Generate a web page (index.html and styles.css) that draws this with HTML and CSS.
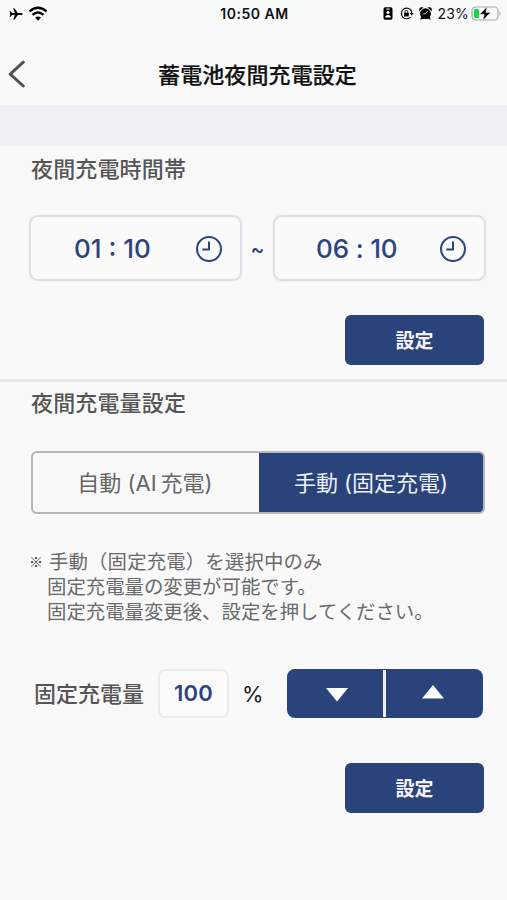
FILE: index.html
```html
<!DOCTYPE html>
<html lang="ja">
<head>
<meta charset="utf-8">
<meta name="viewport" content="width=device-width">
<title>蓄電池夜間充電設定</title>
<link rel="stylesheet" href="styles.css">
</head>
<body>
<div class="status">
  <div class="status-left">
    <svg width="14" height="14" viewBox="0 0 14 14"><path d="M13.7 7c0 .7-.9 1.100-2 1.100H8.900L5.400 12.800H4.100L5.800 8.100H3.100L1.700 9.800H.6L1.200 7 .6 4.200h1.100l1.400 1.700h2.700L4.100 1.200h1.300l3.500 4.700h2.800c1.100 0 2 .4 2 1.100z"/></svg>
    <svg width="20" height="15" viewBox="0 0 20 15"><g fill="none" stroke="#000" stroke-width="2.500"><path d="M1.500 5.400Q10-2 18.500 5.400"/><path d="M4.500 8.900Q10 4.200 15.500 8.900"/></g><path d="M7 11.600Q10 9.300 13 11.600L10 14.700z"/></svg>
  </div>
  <div class="status-time">10:50 AM</div>
  <div class="status-right">
    <svg width="10" height="13" viewBox="0 0 10 13"><rect x=".5" y=".2" width="9" height="12.600" rx="1.700"/><g fill="#f8faf9"><rect x="3.200" y="1.500" width="3.600" height="1"/><circle cx="5" cy="5.400" r="1.500"/><path d="M2.300 10.500V9.300Q5 6.800 7.700 9.300V10.500z"/></g></svg>
    <svg class="lock" width="14" height="13" viewBox="0 0 14 13"><path d="M10.300 2.500A5.300 5.300 0 1 0 10.600 10.100M10.300 2.500A5.300 5.300 0 0 1 11.700 6.500" fill="none" stroke="#111" stroke-width="1.200"/><path d="M9.700 6h4l-2 2.600z"/><rect x="4" y="5.800" width="4.800" height="3.700" rx=".5"/><path d="M5 6V4.800a1.400 1.400 0 0 1 2.800 0V6" fill="none" stroke="#111"/></svg>
    <svg class="alarm" width="13" height="13" viewBox="0 0 13 13"><circle cx="6.500" cy="6.700" r="5.400"/><path d="M.2 4.600V2.500A2.200 2.200 0 0 1 2.500.3H4.500zM12.800 4.600V2.500A2.200 2.200 0 0 0 10.500.3H8.500zM1.200 12.700l1-3.500 3.500 2zM11.800 12.700L10.800 9.200 7.300 11.200z"/><path d="M8.500 4.200L6.500 6.800H4.300" fill="none" stroke="#fff" stroke-width=".8"/></svg>
    <span class="pct">23%</span>
    <svg class="battery" width="31" height="15" viewBox="0 0 31 15"><rect x="1" y="1" width="26" height="13" rx="3.700" fill="#fafafa" stroke="#a9abaa" stroke-width="1.200"/><path d="M28.500 5q2.300 2.500 0 5z" fill="#a9abaa"/><rect x="2.800" y="2.900" width="5.400" height="9.200" rx="1.500" fill="#20d447"/><path d="M16.300.6L8.600 8.300h4.700L11.700 14.400l8-8h-4.900z" stroke="#fafafa" stroke-width=".5"/></svg>
  </div>
</div>
<header class="nav">
  <svg width="18" height="28" viewBox="0 0 18 28"><path d="M15.300 2.200L2.200 14.200 15.300 26" fill="none" stroke="#505050" stroke-width="3" stroke-linecap="round" stroke-linejoin="round"/></svg>
  <h1>蓄電池夜間充電設定</h1>
</header>
<div class="band"></div>
<section class="hours">
  <h2>夜間充電時間帯</h2>
  <div class="times">
    <div class="time"><span>01 : 10</span><svg width="28" height="28" viewBox="0 0 28 28"><circle cx="14" cy="14" r="12"/><path d="M14 6.500V14.400H7.300"/></svg></div>
    <span class="tilde">~</span>
    <div class="time end"><span>06 : 10</span><svg width="28" height="28" viewBox="0 0 28 28"><circle cx="14" cy="14" r="12"/><path d="M14 6.500V14.400H7.300"/></svg></div>
  </div>
  <button class="submit">設定</button>
</section>
<section class="amount">
  <h2>夜間充電量設定</h2>
  <div class="modes">
    <div class="mode"><span>自動 (AI<span class="thin"> </span>充電)</span></div>
    <div class="mode active"><span>手動 (固定充電)</span></div>
  </div>
  <div class="note">
    <span class="mark">※</span>
    <div class="lines">
      <p class="first">手動（固定充電）を選択中のみ</p>
      <p>固定充電量の変更が可能です。</p>
      <p>固定充電量変更後、設定を押してください。</p>
    </div>
  </div>
  <div class="level">
    <span class="label">固定充電量</span>
    <span class="value">100</span>
    <span class="unit">%</span>
    <div class="stepper">
      <div class="step"><svg width="22" height="14" viewBox="0 0 22 14"><path d="M0 0H22L11 13.500z"/></svg></div>
      <div class="step up"><svg width="22" height="14" viewBox="0 0 22 14"><path d="M0 13.500H22L11 0z"/></svg></div>
    </div>
  </div>
  <button class="submit">設定</button>
</section>
</body>
</html>
```
FILE: styles.css
```css
* { box-sizing: border-box; }
body {
  margin: 0;
  width: 507px;
  height: 900px;
  overflow: hidden;
  background: #f9f9f9;
  font-family: Inter, "Noto Sans CJK JP", sans-serif;
  color: #555;
}
svg { display: block; flex: none; }
h1, h2, p { margin: 0; }
.status {
  height: 28px;
  display: grid;
  grid-template-columns: 1fr auto 1fr;
  align-items: center;
  padding: 0 5px 0 9px;
  background: #f8faf9;
  color: #111;
}
.status-left { display: flex; align-items: center; gap: 5px; }
.status-left svg:last-child { margin-top: -2px; }
.status-time { font-size: 14px; line-height: 18px; font-weight: 600; letter-spacing: .5px; margin: 0 2px 0 0; }
.status-right { display: flex; align-items: center; justify-content: flex-end; margin: -2px 0 0; }
.lock { margin-left: 7px; }
.alarm { margin-left: 5px; }
.pct { margin: 0 2px 0 5px; font-size: 14px; letter-spacing: .2px; }
.nav {
  height: 77px;
  display: grid;
  grid-template-columns: 80px 1fr 80px;
  align-items: center;
  padding: 0 0 0 8px;
}
.nav svg { margin-top: 15px; }
.nav h1 {
  margin: 16px 0 0;
  text-align: center;
  font-size: 22px;
  line-height: 30px;
  font-weight: 500;
  letter-spacing: .1px;
  color: #111;
  -webkit-text-stroke: .2px #111;
}
.band { height: 41px; background: #eff0f5; }
.hours {
  height: 236px;
  padding: 7px 23px 0 29px;
  border-bottom: 3px solid #e5e5e7;
  display: flex;
  flex-direction: column;
}
h2 {
  padding-left: 2px;
  font-size: 22px;
  line-height: 32px;
  font-weight: 500;
  letter-spacing: .15px;
  color: #555;
}
.times { display: flex; align-items: center; margin: 30px -2px 0 0; }
.time {
  width: 213px;
  height: 66px;
  display: flex;
  align-items: center;
  justify-content: space-between;
  padding: 0 17px 0 43px;
  border: 2px solid #dddfe7;
  border-radius: 9px;
  background: #fafafb;
  box-shadow: 0 0 2px #e5e6ec;
  color: #2c437c;
  font-size: 26px;
  font-weight: 500;
  white-space: pre;
}
.time.end { padding-left: 41px; }
.time svg { fill: none; stroke: #2c437c; stroke-width: 2; margin-top: 2px; }
.time.end span { letter-spacing: -.15px; }
.tilde { width: 31px; text-align: center; color: #2c437c; font-size: 21px; font-weight: 500; }
.submit {
  align-self: flex-end;
  width: 139px;
  height: 50px;
  margin: 34px 0 0;
  padding: 0;
  border: 0;
  border-radius: 6px;
  background: #2b437b;
  color: #f5f7fc;
  font: 700 19px/50px "Noto Sans CJK JP", sans-serif;
}
.amount { padding: 5px 23px 0 29px; display: flex; flex-direction: column; }
.modes {
  display: flex;
  width: 454px;
  height: 63px;
  margin: 32px 0 0 2px;
  border: 2px solid #b6b7bb;
  border-radius: 6px;
  overflow: hidden;
}
.mode {
  flex: 1;
  display: flex;
  align-items: center;
  justify-content: center;
  padding: 0 2px 3px 0;
  font-size: 22px;
  color: #666;
  white-space: pre;
}
.thin { font-size: 14px; }
.mode.active { background: #2b437b; color: #eef1f8; padding-right: 0; }
.note { display: flex; margin-top: 34px; font-size: 19.400px; line-height: 25px; color: #6a6a6a; }
.mark { width: 18px; font: 500 14px/27px "Noto Sans CJK JP", sans-serif; color: #333; }
.note p { white-space: nowrap; font-family: "Noto Sans CJK JP", sans-serif; }
.note .first { padding-left: 2px; letter-spacing: .15px; }
.level { display: flex; align-items: center; height: 49px; margin-top: 46px; padding-left: 5px; }
.label { width: 124px; font-size: 22px; line-height: 32px; font-weight: 500; color: #555; }
.value {
  width: 71px;
  height: 49px;
  border: 2px solid #ebebed;
  border-radius: 7px;
  background: #fbfbfc;
  text-align: center;
  line-height: 45px;
  font-size: 22px;
  font-weight: 600;
  letter-spacing: .3px;
  color: #2c437c;
}
.unit { width: 58px; padding-left: 13px; font-size: 22px; color: #222; }
.stepper { display: flex; width: 196px; height: 49px; border-radius: 8px; background: #2b437b; }
.step { flex: 1; display: flex; align-items: center; justify-content: center; }
.step.up { position: relative; }
.step.up::before { content: ""; position: absolute; left: -2px; top: 1px; width: 3px; height: 47px; background: #f0f2f8; }
.step svg { fill: #fff; margin: 2px 0 0 2px; }
.step.up svg { margin: -4px 0 0 -2px; }
.amount .submit { margin-top: 45px; }
```
